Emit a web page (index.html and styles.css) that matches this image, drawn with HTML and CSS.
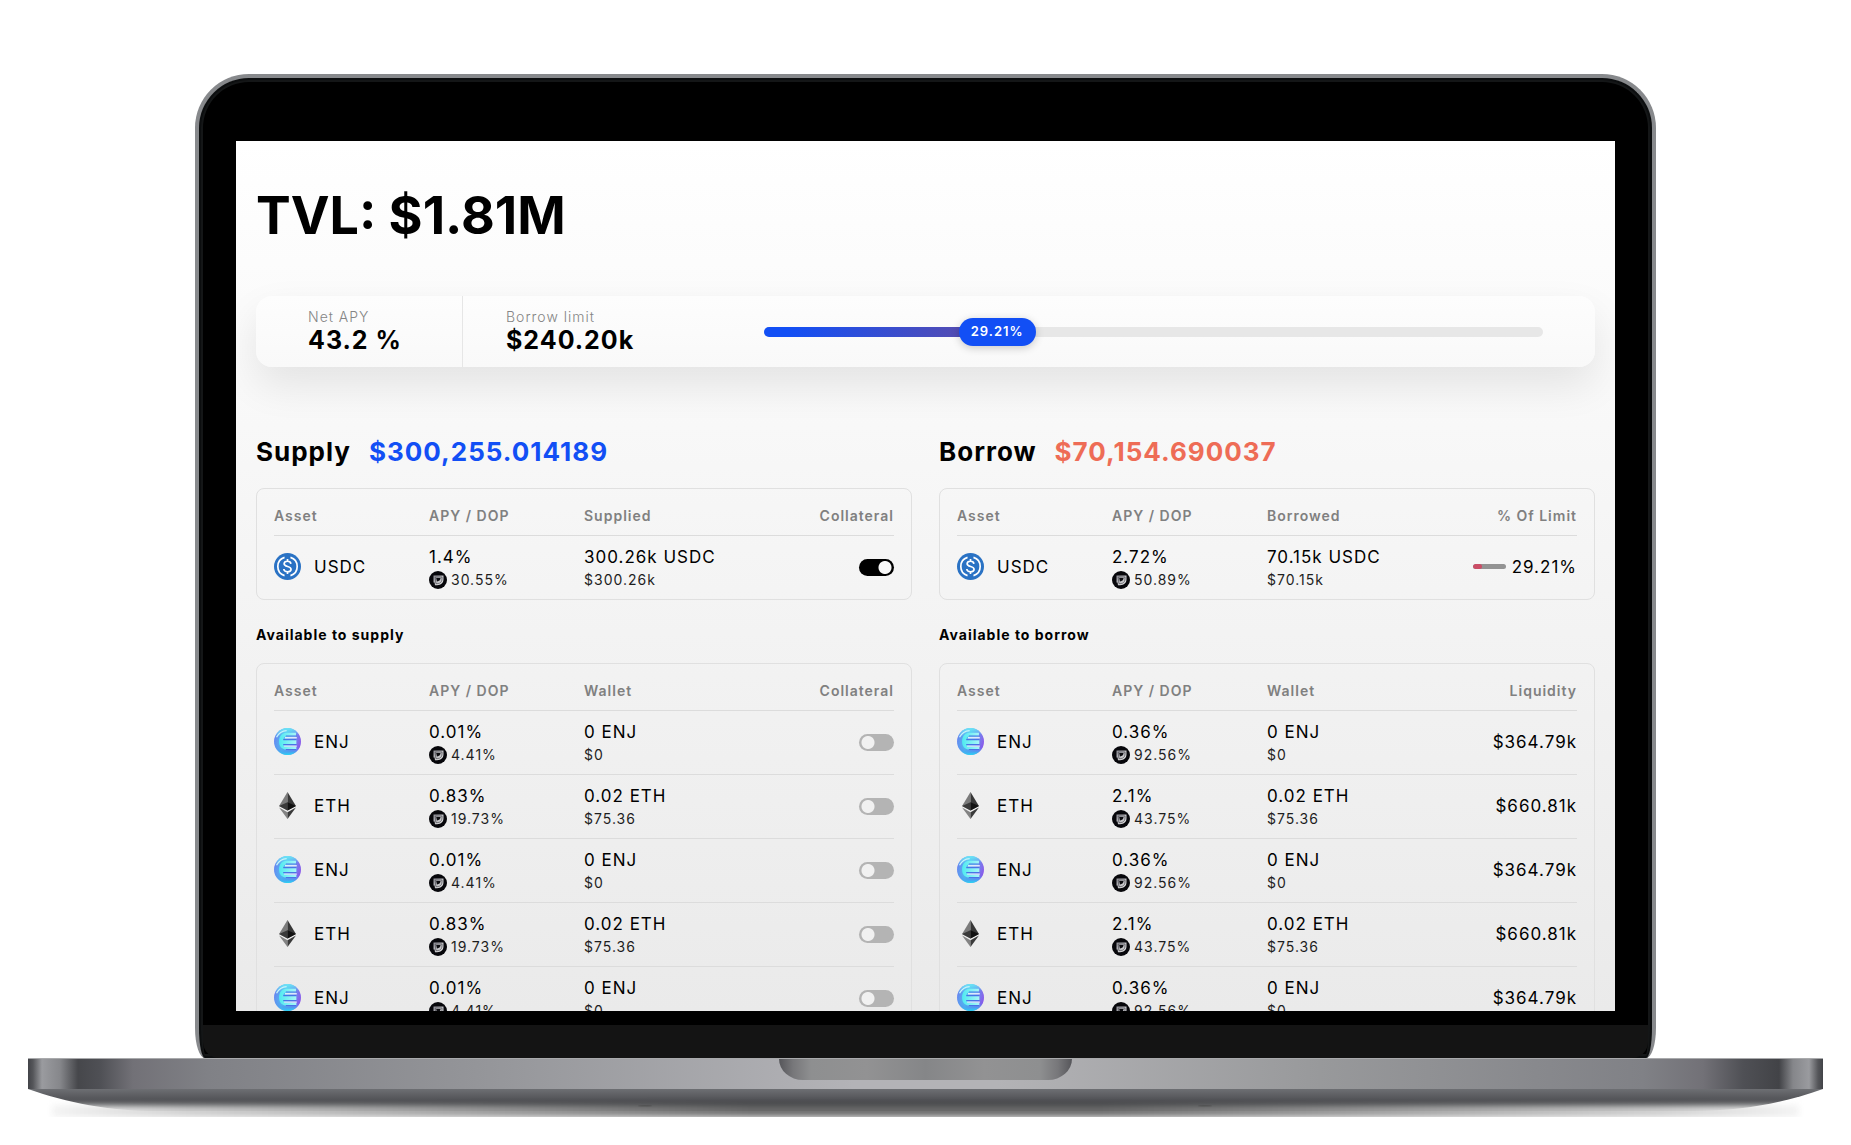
FILE: index.html
```html
<!DOCTYPE html>
<html lang="en">
<head>
<meta charset="utf-8">
<meta name="viewport" content="width=device-width, initial-scale=1">
<title>Supply and borrow dashboard</title>
<link rel="stylesheet" href="styles.css">
</head>
<body>
<svg class="sprite" aria-hidden="true">
  <defs>
    <linearGradient id="enj-bg" x1="0" y1="0.3" x2="1" y2="0.6">
      <stop offset="0" stop-color="#6a7cf0"/>
      <stop offset="0.4" stop-color="#4cc4f0"/>
      <stop offset="0.7" stop-color="#6a8cee"/>
      <stop offset="1" stop-color="#9450e8"/>
    </linearGradient>
    <linearGradient id="enj-shade" x1="0.4" y1="0" x2="0.5" y2="1">
      <stop offset="0" stop-color="#6fe6f6"/>
      <stop offset="0.3" stop-color="#6fe6f6" stop-opacity="0"/>
      <stop offset="0.75" stop-color="#5a6cf0" stop-opacity="0.2"/>
      <stop offset="1" stop-color="#22dcf4"/>
    </linearGradient>
    <linearGradient id="enj-e" x1="0" y1="0" x2="1" y2="0">
      <stop offset="0" stop-color="#4feaf0"/>
      <stop offset="1" stop-color="#a8f6f8"/>
    </linearGradient>
    <linearGradient id="dop-d" x1="0" y1="0" x2="1" y2="1">
      <stop offset="0" stop-color="#8c8c94"/>
      <stop offset="1" stop-color="#f0f0f0"/>
    </linearGradient>
    <symbol id="usdc" viewBox="0 0 32 32">
      <circle cx="16" cy="16" r="16" fill="#2a72c4"/>
      <path d="M12.500 5.200a11.300 11.300 0 0 0 0 21.600M19.500 5.200a11.300 11.300 0 0 1 0 21.600" fill="none" stroke="#fff" stroke-width="2"/>
      <path d="M20 12.800c-.2-2-1.800-3-4-3s-4 1-4 3c0 4.200 8.200 2.200 8.200 6.400 0 2-1.800 3-4.200 3s-4.200-1-4.400-3.200M16 7.200v2.600M16 22.200v2.600" fill="none" stroke="#fff" stroke-width="2"/>
    </symbol>
    <symbol id="enj" viewBox="0 0 32 32">
      <circle cx="16" cy="16" r="16" fill="url(#enj-bg)"/>
      <circle cx="16" cy="16" r="16" fill="url(#enj-shade)"/>
      <path d="M3 11C5.500 6 10 3.200 15 3" fill="none" stroke="#c8f4fa" stroke-width="1.500"/>
      <path d="M26 5.500H15C9 5.500 6 10 6 16s3.500 9.500 9 9.500h11.500V22H13.500c-1.800 0-2.500-1-2.500-3h15.500v-5H11c0-2.500 1-4 3-4h12z" fill="url(#enj-e)"/>
      <path d="M14 9.500h12.500M11 13.800h15.500M11 19.500h15.500M14 25.500h12.500" stroke="#4a74e6" stroke-width="1.300"/>
      <path d="M13 11.500h14M12 21.500h15" stroke="#e0e8fc" stroke-width="1.600"/>
    </symbol>
    <symbol id="eth" viewBox="0 0 32 32">
      <path d="M16 0 6 16.500 16 22z" fill="#7b7b7b"/>
      <path d="M16 0l10 16.500L16 22z" fill="#373737"/>
      <path d="M16 12 6 16.500 16 22z" fill="#3a3a3a"/>
      <path d="M16 12l10 4.500L16 22z" fill="#121212"/>
      <path d="M6 18.500 16 24v8z" fill="#838383"/>
      <path d="M26 18.500 16 24v8z" fill="#3a3a3a"/>
    </symbol>
    <symbol id="dop" viewBox="0 0 18 18">
      <circle cx="9" cy="9" r="9" fill="#07070b"/>
      <path d="M4.500 4.500H14.500V8c0 4-2.500 6.200-6.500 6.200H6L5.500 11.500H4.500z" fill="url(#dop-d)"/>
      <path d="M6.200 6h6.800v2c0 3-1.800 4.600-4.800 4.600H7L6.700 11z" fill="none" stroke="#3a3a42" stroke-width="0.600"/>
      <path d="M7.200 7h4.300C11.500 9 10 10.200 8 10.500z" fill="#0c0c10"/>
    </symbol>
  </defs>
</svg>

<main class="laptop">
  <div class="lid">
    <div class="screen">
      <h1 class="tvl">TVL: $1.81M</h1>

      <section class="stats">
        <div class="stat stat-apy">
          <span class="stat-label">Net APY</span>
          <strong class="stat-value">43.2 %</strong>
        </div>
        <div class="stat stat-limit">
          <span class="stat-label" id="limit-label">Borrow limit</span>
          <strong class="stat-value">$240.20k</strong>
        </div>
        <div class="usage">
          <progress class="usage-bar" value="29.21" max="100" aria-labelledby="limit-label"></progress>
          <span class="usage-pill">29.21%</span>
        </div>
      </section>

      <div class="markets">
        <section class="market">
          <h2 class="market-title">Supply <span class="supply-total">$300,255.014189</span></h2>
          <div class="panel">
            <table class="assets">
              <thead><tr><th>Asset</th><th>APY / DOP</th><th>Supplied</th><th>Collateral</th></tr></thead>
              <tbody>
                <tr>
                  <td><div class="coin"><svg class="coin-icon"><use href="#usdc"/></svg>USDC</div></td>
                  <td>1.4%<div class="sub"><svg class="dop-icon"><use href="#dop"/></svg>30.55%</div></td>
                  <td>300.26k USDC<div class="sub">$300.26k</div></td>
                  <td><input class="toggle" type="checkbox" aria-label="Use USDC as collateral" checked></td>
                </tr>
              </tbody>
            </table>
          </div>
          <h3 class="list-title">Available to supply</h3>
          <div class="panel">
            <table class="assets">
              <thead><tr><th>Asset</th><th>APY / DOP</th><th>Wallet</th><th>Collateral</th></tr></thead>
              <tbody>
                <tr>
                  <td><div class="coin"><svg class="coin-icon"><use href="#enj"/></svg>ENJ</div></td>
                  <td>0.01%<div class="sub"><svg class="dop-icon"><use href="#dop"/></svg>4.41%</div></td>
                  <td>0 ENJ<div class="sub">$0</div></td>
                  <td><input class="toggle" type="checkbox" aria-label="Use ENJ as collateral"></td>
                </tr>
                <tr>
                  <td><div class="coin"><svg class="coin-icon"><use href="#eth"/></svg>ETH</div></td>
                  <td>0.83%<div class="sub"><svg class="dop-icon"><use href="#dop"/></svg>19.73%</div></td>
                  <td>0.02 ETH<div class="sub">$75.36</div></td>
                  <td><input class="toggle" type="checkbox" aria-label="Use ETH as collateral"></td>
                </tr>
                <tr>
                  <td><div class="coin"><svg class="coin-icon"><use href="#enj"/></svg>ENJ</div></td>
                  <td>0.01%<div class="sub"><svg class="dop-icon"><use href="#dop"/></svg>4.41%</div></td>
                  <td>0 ENJ<div class="sub">$0</div></td>
                  <td><input class="toggle" type="checkbox" aria-label="Use ENJ as collateral"></td>
                </tr>
                <tr>
                  <td><div class="coin"><svg class="coin-icon"><use href="#eth"/></svg>ETH</div></td>
                  <td>0.83%<div class="sub"><svg class="dop-icon"><use href="#dop"/></svg>19.73%</div></td>
                  <td>0.02 ETH<div class="sub">$75.36</div></td>
                  <td><input class="toggle" type="checkbox" aria-label="Use ETH as collateral"></td>
                </tr>
                <tr>
                  <td><div class="coin"><svg class="coin-icon"><use href="#enj"/></svg>ENJ</div></td>
                  <td>0.01%<div class="sub"><svg class="dop-icon"><use href="#dop"/></svg>4.41%</div></td>
                  <td>0 ENJ<div class="sub">$0</div></td>
                  <td><input class="toggle" type="checkbox" aria-label="Use ENJ as collateral"></td>
                </tr>
              </tbody>
            </table>
          </div>
        </section>

        <section class="market">
          <h2 class="market-title">Borrow <span class="borrow-total">$70,154.690037</span></h2>
          <div class="panel">
            <table class="assets">
              <thead><tr><th>Asset</th><th>APY / DOP</th><th>Borrowed</th><th>% Of Limit</th></tr></thead>
              <tbody>
                <tr>
                  <td><div class="coin"><svg class="coin-icon"><use href="#usdc"/></svg>USDC</div></td>
                  <td>2.72%<div class="sub"><svg class="dop-icon"><use href="#dop"/></svg>50.89%</div></td>
                  <td>70.15k USDC<div class="sub">$70.15k</div></td>
                  <td><div class="limit"><progress class="limit-bar" value="29.21" max="100" aria-label="Share of limit"></progress>29.21%</div></td>
                </tr>
              </tbody>
            </table>
          </div>
          <h3 class="list-title">Available to borrow</h3>
          <div class="panel">
            <table class="assets">
              <thead><tr><th>Asset</th><th>APY / DOP</th><th>Wallet</th><th>Liquidity</th></tr></thead>
              <tbody>
                <tr>
                  <td><div class="coin"><svg class="coin-icon"><use href="#enj"/></svg>ENJ</div></td>
                  <td>0.36%<div class="sub"><svg class="dop-icon"><use href="#dop"/></svg>92.56%</div></td>
                  <td>0 ENJ<div class="sub">$0</div></td>
                  <td>$364.79k</td>
                </tr>
                <tr>
                  <td><div class="coin"><svg class="coin-icon"><use href="#eth"/></svg>ETH</div></td>
                  <td>2.1%<div class="sub"><svg class="dop-icon"><use href="#dop"/></svg>43.75%</div></td>
                  <td>0.02 ETH<div class="sub">$75.36</div></td>
                  <td>$660.81k</td>
                </tr>
                <tr>
                  <td><div class="coin"><svg class="coin-icon"><use href="#enj"/></svg>ENJ</div></td>
                  <td>0.36%<div class="sub"><svg class="dop-icon"><use href="#dop"/></svg>92.56%</div></td>
                  <td>0 ENJ<div class="sub">$0</div></td>
                  <td>$364.79k</td>
                </tr>
                <tr>
                  <td><div class="coin"><svg class="coin-icon"><use href="#eth"/></svg>ETH</div></td>
                  <td>2.1%<div class="sub"><svg class="dop-icon"><use href="#dop"/></svg>43.75%</div></td>
                  <td>0.02 ETH<div class="sub">$75.36</div></td>
                  <td>$660.81k</td>
                </tr>
                <tr>
                  <td><div class="coin"><svg class="coin-icon"><use href="#enj"/></svg>ENJ</div></td>
                  <td>0.36%<div class="sub"><svg class="dop-icon"><use href="#dop"/></svg>92.56%</div></td>
                  <td>0 ENJ<div class="sub">$0</div></td>
                  <td>$364.79k</td>
                </tr>
              </tbody>
            </table>
          </div>
        </section>
      </div>
    </div>
    <div class="chin"></div>
  </div>

  <div class="base">
    <div class="deck"><div class="notch"></div></div>
    <svg class="belly" viewBox="0 0 1795 22" preserveAspectRatio="none" aria-hidden="true">
      <defs>
        <linearGradient id="belly-fill" x1="0" y1="0" x2="0" y2="1">
          <stop offset="0" stop-color="#6d6f73"/>
          <stop offset="0.4" stop-color="#57585c"/>
          <stop offset="1" stop-color="#252629"/>
        </linearGradient>
      </defs>
      <path d="M0 0H1795C1755 14 1715 22 1665 22H130C80 22 40 14 0 0z" fill="url(#belly-fill)"/>
      <ellipse cx="617" cy="17" rx="7" ry="1" fill="#1b1c1e"/>
      <ellipse cx="1177" cy="17" rx="7" ry="1" fill="#1b1c1e"/>
    </svg>
    <div class="ground"></div>
  </div>
</main>
</body>
</html>
```
FILE: styles.css
```css
* {
  box-sizing: border-box;
}

body {
  margin: 0;
  background: #fff;
  color: #000;
  font-family: Inter, "Liberation Sans", sans-serif;
}

.sprite {
  position: absolute;
  width: 0;
  height: 0;
}

.laptop {
  padding-top: 74px;
}

/* Lid and display */
.lid {
  margin: 0 195px;
  padding: 63px 37px 0;
  border: 4px solid #87898c;
  border-bottom: 0;
  border-radius: 54px 54px 10px 10px / 54px 54px 30px 30px;
  background: #000;
  box-shadow: inset 0 0 0 2px #0c0e0f, inset 0 0 0 4px #141617;
}

.screen {
  height: 76vh;
  padding: 0 20px;
  overflow: hidden;
  background: linear-gradient(#fff, #f6f6f6 42%, #eaeaea);
}

.chin {
  height: 47px;
  margin: 0 -33px;
  border-top: 14px solid #000;
  border-radius: 0 0 16px 16px;
  background: #141414;
}

.tvl {
  margin: 0;
  padding: 44px 0 50px;
  font-size: 52px;
  line-height: 61px;
  font-weight: 700;
}

/* Summary card */
.stats {
  display: flex;
  height: 71px;
  border-radius: 16px;
  background: linear-gradient(#fdfdfd, #f9f9f9);
  box-shadow: 0 18px 40px rgba(0, 0, 0, 0.09);
  letter-spacing: 1px;
}

.stat {
  display: flex;
  flex-direction: column;
  justify-content: center;
  padding-bottom: 2px;
}

.stat-apy {
  width: 207px;
  padding-left: 52px;
  border-right: 1px solid #e6e6e6;
}

.stat-limit {
  width: 301px;
  padding-left: 43px;
}

.stat-label {
  color: #858585;
  font-size: 14px;
  line-height: 18px;
  font-weight: 300;
}

.stat-value {
  font-size: 25px;
  line-height: 28px;
  font-weight: 700;
}

.usage {
  position: relative;
  display: flex;
  flex: 1;
  align-items: center;
  margin-right: 52px;
}

.usage-bar,
.limit-bar {
  display: block;
  appearance: none;
  border: 0;
  overflow: hidden;
}

.usage-bar {
  width: 100%;
  height: 10px;
  border-radius: 5px;
}

.usage-bar::-webkit-progress-bar {
  background: #e7e7e7;
}

.usage-bar::-webkit-progress-value {
  background: linear-gradient(90deg, #124ff5 10%, #5f4ca8);
}

.usage-pill {
  position: absolute;
  left: 25%;
  padding: 0 12px 2px;
  border-radius: 14px;
  background: #124ff5;
  box-shadow: 0 2px 8px rgba(0, 0, 0, 0.2);
  color: #fff;
  font-size: 13px;
  line-height: 26px;
  font-weight: 600;
}

/* Supply and borrow columns */
.markets {
  display: grid;
  grid-template-columns: 1fr 1fr;
  gap: 27px;
  padding-top: 68px;
  letter-spacing: 1px;
}

.market-title {
  display: flex;
  gap: 18px;
  margin: 0;
  padding-bottom: 19px;
  font-size: 26px;
  line-height: 34px;
  font-weight: 700;
}

.supply-total {
  color: #124ff5;
}

.borrow-total {
  color: #ee6c56;
}

.panel {
  padding: 0 17px;
  border: 1px solid #e0e0e0;
  border-radius: 8px;
}

.list-title {
  margin: 0;
  padding: 26px 0 19px;
  font-size: 14px;
  line-height: 18px;
  font-weight: 700;
}

.assets {
  width: 100%;
  table-layout: fixed;
  border-collapse: separate;
  border-spacing: 0;
}

.assets th,
.assets td {
  padding: 0;
  text-align: left;
}

.assets th {
  height: 47px;
  padding-top: 6px;
  border-bottom: 1px solid #dcdcdc;
  color: #808080;
  font-size: 14px;
  font-weight: 600;
}

.assets td {
  height: 64px;
  border-bottom: 1px solid #dcdcdc;
  font-size: 17px;
  line-height: 24px;
  font-weight: 400;
}

.assets tbody tr:last-child td {
  height: 63px;
  border-bottom: 0;
}

.assets th:last-child,
.assets td:last-child {
  text-align: right;
}

.assets td:first-child,
.assets td:last-child {
  padding-bottom: 2px;
}

.coin {
  display: flex;
  align-items: center;
  gap: 13px;
}

.coin-icon {
  width: 27px;
  height: 27px;
}

.sub {
  display: flex;
  align-items: center;
  gap: 4px;
  color: #1e1e1e;
  font-size: 14px;
  line-height: 22px;
}

.dop-icon {
  width: 18px;
  height: 18px;
}

.limit {
  display: flex;
  align-items: center;
  justify-content: flex-end;
  gap: 6px;
}

.limit-bar {
  width: 33px;
  height: 5px;
  border-radius: 3px;
}

.limit-bar::-webkit-progress-bar {
  background: #939393;
}

.limit-bar::-webkit-progress-value {
  border-radius: 3px;
  background: #cb4d66;
}

.toggle {
  display: block;
  width: 35px;
  height: 17px;
  margin: 2px 0 0 auto;
  appearance: none;
  border-radius: 9px;
  background: radial-gradient(circle at 9px 50%, #f1f1f1 6px, #b4b4b4 7px);
}

.toggle:checked {
  background: radial-gradient(circle at 26px 50%, #f8f8f8 6px, #000 7px);
}

/* Keyboard base */
.base {
  margin: 0 28px;
}

.deck {
  display: flex;
  justify-content: center;
  height: 31px;
  border-top: 1px solid #a9aaac;
  background: linear-gradient(90deg, #424348, #55565a 5px, #9a9b9f 14px, #86878b 32px, #46474b 50px, #4f5055 72px, #727177 105px, #808186 10%, #949599 25%, #b3b3b7 46%, #b3b3b6 54%, #98999b 72%, #808186 90%, #727177 calc(100% - 120px), #4f5055 calc(100% - 80px), #424347 calc(100% - 44px), #85868a calc(100% - 30px), #9a9b9f calc(100% - 14px), #55565a calc(100% - 5px), #424348);
}

.notch {
  width: 293px;
  height: 21px;
  border-radius: 0 0 24px 24px / 0 0 21px 21px;
  background: linear-gradient(90deg, #56565a, #77777a 14px, #8e8f90 32px, #929293 30%, #858688 50%, #929293 70%, #8e8f90 calc(100% - 32px), #77777a calc(100% - 14px), #56565a);
}

.belly {
  position: relative;
  display: block;
  width: 100%;
  height: 22px;
}

.ground {
  height: 12px;
  margin: -6px 24px 0;
  background: linear-gradient(90deg, #f4f4f4, #cfcfcf 8%, #6c6c6c 40%, #6c6c6c 60%, #cfcfcf 92%, #f4f4f4);
  filter: blur(3px);
}
```
